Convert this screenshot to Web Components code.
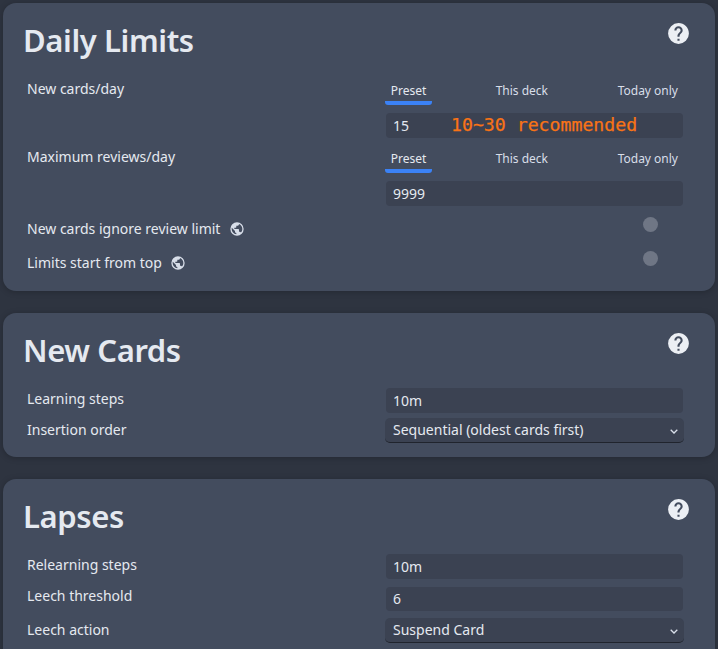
<!DOCTYPE html>
<html>
<head>
<meta charset="utf-8">
<title>Deck options</title>
<style>
  html, body { margin: 0; background: #2e3440; height: 100%; overflow: hidden; }
  body {
    padding: 3px;
    box-sizing: border-box;
    font: 14px/20px "Noto Sans", sans-serif;
    color: #e5e9f0;
  }
</style>
</head>
<body>
<deck-page>
  <option-card heading="Daily Limits" style="height:288px">
    <option-row label="New cards/day" style="margin-top:12px;--label-shift:-1px">
      <tab-strip></tab-strip>
      <text-field value="15" style="margin-top:8px"><span slot="hint">10~30 recommended</span></text-field>
    </option-row>
    <option-row label="Maximum reviews/day" style="margin-top:10px;--label-shift:-1px">
      <tab-strip></tab-strip>
      <text-field value="9999" style="margin-top:8px"></text-field>
    </option-row>
    <switch-row label="New cards ignore review limit" style="margin-top:1px;--globe-gap:9px"></switch-row>
    <switch-row label="Limits start from top"></switch-row>
  </option-card>

  <option-card heading="New Cards" style="height:144px">
    <option-row label="Learning steps" style="margin-top:10px;--label-shift:1px"><text-field value="10m"></text-field></option-row>
    <option-row label="Insertion order" style="margin-top:5px;--label-shift:2px"><select-field value="Sequential (oldest cards first)"></select-field></option-row>
  </option-card>

  <option-card heading="Lapses" style="height:200px">
    <option-row label="Relearning steps" style="margin-top:10px;--label-shift:1px"><text-field value="10m"></text-field></option-row>
    <option-row label="Leech threshold" style="margin-top:8px;--label-shift:-1px"><text-field value="6" style="height:24px"></text-field></option-row>
    <option-row label="Leech action" style="margin-top:7px;--label-shift:2px"><select-field value="Suspend Card"></select-field></option-row>
  </option-card>
</deck-page>

<script>
// page wrapper
customElements.define('deck-page', class DeckPage extends HTMLElement {
  constructor() {
    super()
    this.attachShadow({mode: 'open'})
    this.shadowRoot.innerHTML = `
      <style>
        :host { display: flex; flex-direction: column; gap: 22px; width: 712px; }
      </style>
      <slot></slot>
    `
  }
})

// card with heading and help icon
customElements.define('option-card', class OptionCard extends HTMLElement {
  constructor() {
    super()
    this.attachShadow({mode: 'open'})
    this.shadowRoot.innerHTML = `
      <style>
        :host {
          display: block;
          flex: none;
          box-sizing: border-box;
          padding: 12px 32px 0 24px;
          background: #434c5e;
          border-radius: 13px;
          box-shadow: 0 1px 6px rgba(0,0,0,.22);
        }
        header { display: flex; justify-content: space-between; height: 53px; margin-left: -4px; }
        h1 { margin: 0; font-size: 31px; line-height: 50px; font-weight: 600; color: #e5e9f0; letter-spacing: -.4px; }
        svg { width: 25px; height: 25px; margin: 6px -8px 0 0; fill: #eceff4; }
      </style>
      <header>
        <h1></h1>
        <svg viewBox="0 0 24 24"><path d="M15.07,11.25L14.17,12.17C13.45,12.89 13,13.5 13,15H11V14.5C11,13.39 11.45,12.39 12.17,11.67L13.41,10.41C13.78,10.05 14,9.55 14,9C14,7.89 13.1,7 12,7A2,2 0 0,0 10,9H8A4,4 0 0,1 12,5A4,4 0 0,1 16,9C16,9.88 15.64,10.67 15.07,11.25M13,19H11V17H13M12,2A10,10 0 0,0 2,12A10,10 0 0,0 12,22A10,10 0 0,0 22,12C22,6.47 17.5,2 12,2Z"/></svg>
      </header>
      <slot></slot>
    `
    this.shadowRoot.querySelector('h1').textContent = this.getAttribute('heading')
  }
})

// label on the left, control on the right
customElements.define('option-row', class OptionRow extends HTMLElement {
  constructor() {
    super()
    this.attachShadow({mode: 'open'})
    this.shadowRoot.innerHTML = `
      <style>
        :host { display: grid; grid-template-columns: 359px 297px; }
        .label { line-height: 20px; margin-top: var(--label-shift, 0); }
        .control { min-width: 0; }
      </style>
      <div class="label"></div>
      <div class="control"><slot></slot></div>
    `
    this.shadowRoot.querySelector('.label').textContent = this.getAttribute('label')
  }
})

// Preset / This deck / Today only
customElements.define('tab-strip', class TabStrip extends HTMLElement {
  constructor() {
    super()
    this.attachShadow({mode: 'open'})
    this.shadowRoot.innerHTML = `
      <style>
        :host { display: flex; justify-content: space-between; height: 25px; font-size: 12px; line-height: 21px; }
        span { color: #d8dee9; }
        .active {
          color: #e5e9f0;
          width: 47px;
          margin-left: -1px;
          height: 21px;
          text-align: center;
          border-bottom: 4px solid #3b82f6;
          border-radius: 0 0 3px 3px;
        }
        .mid { margin-left: -6px; }
        .last { margin-right: 5px; }
      </style>
      <span class="active">Preset</span>
      <span class="mid">This deck</span>
      <span class="last">Today only</span>
    `
  }
})

// number / text input
customElements.define('text-field', class TextField extends HTMLElement {
  constructor() {
    super()
    this.attachShadow({mode: 'open'})
    this.shadowRoot.innerHTML = `
      <style>
        :host {
          display: flex;
          align-items: center;
          height: 25px;
          box-sizing: border-box;
          padding-left: 7px;
          background: #3b4252;
          border-radius: 4px;
        }
        .val { width: 58px; flex: none; }
        ::slotted(span) {
          font: 18.2px/25px "DejaVu Sans Mono", monospace;
          color: #f97316;
          -webkit-text-stroke: .25px #f97316;
          margin-top: -2px;
        }
      </style>
      <span class="val"></span><slot name="hint"></slot>
    `
    this.shadowRoot.querySelector('.val').textContent = this.getAttribute('value')
  }
})

// select box
customElements.define('select-field', class SelectField extends HTMLElement {
  constructor() {
    super()
    this.attachShadow({mode: 'open'})
    this.shadowRoot.innerHTML = `
      <style>
        :host {
          display: flex;
          align-items: center;
          justify-content: space-between;
          height: 25px;
          box-sizing: border-box;
          margin: 0 -1px;
          padding: 0 6px 0 8px;
          background: #3b4252;
          border-radius: 5px;
          border-bottom: 1px solid #20242d;
        }
        svg { width: 8px; height: 5px; margin-top: 2px; fill: none; stroke: #d8dee9; stroke-width: 1.3; }
      </style>
      <span class="val"></span>
      <svg viewBox="0 0 8 5"><path d="M.7 .8 L4 4 L7.3 .8"/></svg>
    `
    this.shadowRoot.querySelector('.val').textContent = this.getAttribute('value')
  }
})

// row with a globe icon and a switch knob
customElements.define('switch-row', class SwitchRow extends HTMLElement {
  constructor() {
    super()
    this.attachShadow({mode: 'open'})
    this.shadowRoot.innerHTML = `
      <style>
        :host { display: flex; align-items: center; height: 34px; }
        .text { display: flex; align-items: center; padding-top: 10px; }
        svg { width: 16px; height: 16px; margin-left: var(--globe-gap, 8px); fill: #d8dee9; }
        i { width: 15px; height: 15px; border-radius: 50%; background: #6f7685; margin-left: auto; margin-right: 25px; }
      </style>
      <div class="text">
        <span class="label"></span>
        <svg viewBox="0 0 24 24"><path d="M17.9,17.39C17.64,16.59 16.89,16 16,16H15V13A1,1 0 0,0 14,12H8V10H10A1,1 0 0,0 11,9V7H13A2,2 0 0,0 15,5V4.59C17.93,5.77 20,8.64 20,12C20,14.08 19.2,15.97 17.9,17.39M11,19.93C7.05,19.44 4,16.08 4,12C4,11.38 4.08,10.78 4.21,10.19L9,15V16A2,2 0 0,0 11,18M12,2A10,10 0 0,0 2,12A10,10 0 0,0 12,22A10,10 0 0,0 22,12A10,10 0 0,0 12,2Z"/></svg>
      </div>
      <i></i>
    `
    this.shadowRoot.querySelector('.label').textContent = this.getAttribute('label')
  }
})
</script>
</body>
</html>
